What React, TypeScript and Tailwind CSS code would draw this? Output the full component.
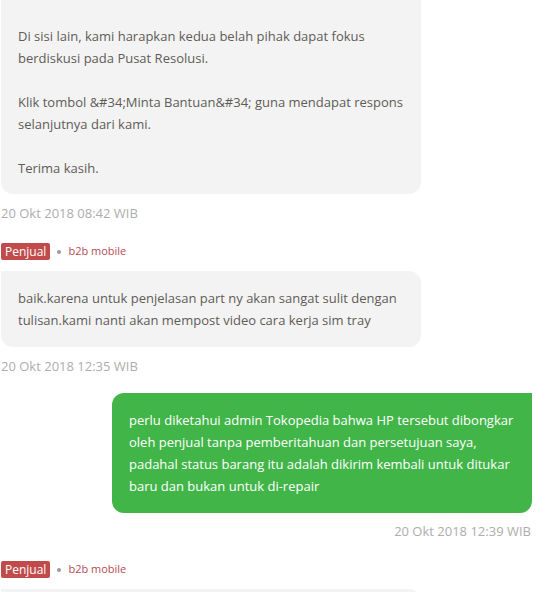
import React from "react";

const font = { fontFamily: '"Open Sans", "Noto Sans", sans-serif' };

function Meta() {
  return (
    <div className="flex items-center h-[17px]">
      <span className="bg-[#c14b4b] text-white text-[12px] leading-[17px] h-[17px] px-[4px] rounded-[2px]">Penjual</span>
      <span className="ml-[7px] w-[4px] h-[4px] rounded-full bg-[#9a9a9a]" />
      <span className="ml-[7px] text-[11px] text-[#b64b55]">b2b mobile</span>
    </div>
  );
}

function Time({ children, right }: { children: React.ReactNode; right?: boolean }) {
  return (
    <div className={`text-[13px] leading-[18px] text-[#adadad] ${right ? "text-right pr-[1px]" : ""}`}>{children}</div>
  );
}

export default function App() {
  return (
    <div style={font} className="w-[545px] h-[592px] overflow-hidden bg-white">
      <div className="w-[532px] pl-[1px] flex flex-col">
        <div className="w-[420px] bg-[#f3f3f3] rounded-b-[12px] pt-[25px] pb-[15px] pl-[17px] pr-[12px] text-[13px] leading-[22px] text-[#5f5b58]">
          <p>Di sisi lain, kami harapkan kedua belah pihak dapat fokus berdiskusi pada Pusat Resolusi.</p>
          <p className="mt-[22px]">Klik tombol &amp;#34;Minta Bantuan&amp;#34; guna mendapat respons selanjutnya dari kami.</p>
          <p className="mt-[22px]">Terima kasih.</p>
        </div>
        <div className="mt-[10px]"><Time>20 Okt 2018 08:42 WIB</Time></div>

        <div className="mt-[21px]"><Meta /></div>
        <div className="mt-[11px] w-[420px] bg-[#f3f3f3] rounded-b-[12px] rounded-tr-[12px] py-[16px] pl-[17px] pr-[12px] text-[13px] leading-[22px] text-[#5f5b58]">
          baik.karena untuk penjelasan part ny akan sangat sulit dengan tulisan.kami nanti akan mempost video cara kerja sim tray
        </div>
        <div className="mt-[10px]"><Time>20 Okt 2018 12:35 WIB</Time></div>

        <div className="mt-[18px] self-end w-[420px] bg-[#42b549] rounded-b-[12px] rounded-tl-[12px] py-[16px] pl-[17px] pr-[10px] text-[13px] leading-[22px] text-white">
          perlu diketahui admin Tokopedia bahwa HP tersebut dibongkar oleh penjual tanpa pemberitahuan dan persetujuan saya, padahal status barang itu adalah dikirim kembali untuk ditukar baru dan bukan untuk di-repair
        </div>
        <div className="mt-[9px]"><Time right>20 Okt 2018 12:39 WIB</Time></div>

        <div className="mt-[21px]"><Meta /></div>
        <div className="mt-[11px] w-[420px] h-[40px] bg-[#f3f3f3] rounded-tr-[12px]" />
      </div>
    </div>
  );
}
